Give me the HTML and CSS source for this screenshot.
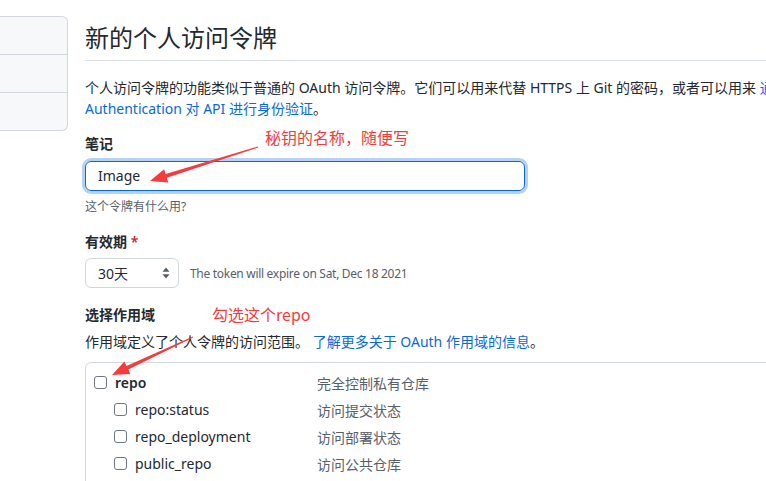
FILE: index.html
```html
<!DOCTYPE html>
<html lang="zh-CN">
<head>
<meta charset="utf-8">
<title>新的个人访问令牌</title>
<link rel="stylesheet" href="styles.css">
</head>
<body>
<div class="layout">
  <nav class="sidebar">
    <div class="side-row"></div>
    <div class="side-row"></div>
    <div class="side-row"></div>
  </nav>
  <main class="main">
    <h1 class="title">新的个人访问令牌</h1>
    <p class="intro">个人访问令牌的功能类似于普通的 OAuth 访问令牌。它们可以用来代替 HTTPS 上 Git 的密码，或者可以用来 <a class="link" href="#">通过 Basic<br>Authentication 对 API 进行身份验证</a>。</p>

    <label class="label">笔记</label>
    <div class="input">Image</div>
    <p class="note">这个令牌有什么用?</p>

    <label class="label label-exp">有效期 <span class="req">*</span></label>
    <div class="exp-row">
      <div class="select">30天
        <svg class="updown" width="8" height="12" viewBox="0 0 8 12"><path d="M4 0.5 L7.5 4.8 H0.5 Z M4 11.5 L7.5 7.2 H0.5 Z" fill="#57606a"/></svg>
      </div>
      <span class="exp-note">The token will expire on Sat, Dec 18 2021</span>
    </div>

    <label class="label label-scope">选择作用域</label>
    <p class="scope-desc">作用域定义了个人令牌的访问范围。 <a class="link" href="#">了解更多关于 OAuth 作用域的信息</a>。</p>

    <div class="scopes">
      <div class="scope-row">
        <div class="scope-name top"><span class="cb"></span><span class="name-bold">repo</span></div>
        <div class="scope-text">完全控制私有仓库</div>
      </div>
      <div class="scope-row">
        <div class="scope-name sub"><span class="cb"></span><span>repo:status</span></div>
        <div class="scope-text">访问提交状态</div>
      </div>
      <div class="scope-row">
        <div class="scope-name sub"><span class="cb"></span><span>repo_deployment</span></div>
        <div class="scope-text">访问部署状态</div>
      </div>
      <div class="scope-row">
        <div class="scope-name sub"><span class="cb"></span><span>public_repo</span></div>
        <div class="scope-text">访问公共仓库</div>
      </div>
    </div>
  </main>
</div>

<div class="anno anno1">秘钥的名称，随便写</div>
<div class="anno anno2">勾选这个repo</div>
<svg class="arrows" width="766" height="481" viewBox="0 0 766 481">
  <polygon fill="#f53c3c" points="150,181 164.1,169.2 165.6,174 257.8,146.5 258.2,147.5 166.8,177.8 168.3,182.6"/>
  <polygon fill="#f53c3c" points="112,375 124.4,361.5 126.5,366 192.8,336.5 193.2,337.5 128.3,369.6 130.4,374.1"/>
</svg>
</body>
</html>
```

FILE: styles.css
```css
html, body {
  margin: 0;
  padding: 0;
  overflow: hidden;
  background: #ffffff;
}
body {
  width: 766px;
  height: 481px;
  position: relative;
  font-family: "Noto Sans", "Noto Sans CJK SC", sans-serif;
  color: #24292f;
  font-size: 14px;
}
.layout {
  display: flex;
  padding-top: 16px;
  height: 465px;
  overflow: hidden;
}
.sidebar {
  width: 67px;
  flex-shrink: 0;
  background: #f6f8fa;
  border: 1px solid #d0d7de;
  border-left: none;
  border-radius: 0 6px 6px 0;
  align-self: flex-start;
}
.side-row {
  height: 37px;
  border-bottom: 1px solid #d0d7de;
}
.side-row:last-child {
  border-bottom: none;
}
.main {
  margin-left: 17px;
  width: 820px;
  flex-shrink: 0;
  padding-top: 6px;
}
.title {
  margin: 0;
  font-size: 24px;
  font-weight: 400;
  line-height: 30px;
  padding-bottom: 8px;
  border-bottom: 1px solid #d8dee4;
  font-family: "Noto Sans CJK SC", sans-serif;
}
.intro {
  margin: 16px 0 0;
  line-height: 21px;
  white-space: nowrap;
}
.link {
  color: #0969da;
  text-decoration: none;
}
.label {
  display: block;
  font-weight: 600;
  line-height: 21px;
  margin-top: 14px;
}
.input {
  margin-top: 7px;
  width: 414px;
  height: 28px;
  box-sizing: content-box;
  padding: 0 12px;
  border: 1px solid #0969da;
  border-radius: 6px;
  box-shadow: 0 0 0 3px rgba(9, 105, 218, 0.3);
  line-height: 28px;
  font-size: 14px;
}
.note {
  margin: 7px 0 0;
  font-size: 12px;
  line-height: 18px;
  color: #57606a;
}
.label-exp {
  margin-top: 15px;
}
.req {
  color: #cf222e;
}
.exp-row {
  display: flex;
  align-items: center;
  margin-top: 6px;
}
.select {
  display: flex;
  align-items: center;
  justify-content: space-between;
  box-sizing: border-box;
  height: 30px;
  width: 94px;
  padding: 0 8px 0 12px;
  border: 1px solid #d0d7de;
  border-radius: 6px;
}
.updown {
  display: block;
}
.exp-note {
  margin-left: 11px;
  font-size: 12px;
  letter-spacing: -0.3px;
  color: #57606a;
}
.label-scope {
  margin-top: 16px;
}
.scope-desc {
  margin: 6px 0 0;
  line-height: 21px;
}
.scopes {
  margin-top: 10px;
  border: 1px solid #d0d7de;
  border-radius: 6px 6px 0 0;
  padding: 6px 0 0 8px;
  height: 140px;
}
.scope-row {
  display: flex;
  align-items: center;
  height: 27px;
}
.scope-name {
  width: 223px;
  display: flex;
  align-items: center;
}
.scope-name.sub {
  padding-left: 20px;
  width: 203px;
}
.cb {
  width: 11px;
  height: 11px;
  border: 1px solid #6e7781;
  border-radius: 3px;
  margin-right: 8px;
  flex-shrink: 0;
}
.name-bold {
  font-weight: 600;
}
.scope-text {
  color: #57606a;
}
.anno {
  position: absolute;
  color: #f53c3c;
  font-family: "Noto Sans CJK SC", sans-serif;
  font-size: 16px;
  line-height: 20px;
}
.anno1 {
  left: 265px;
  top: 127px;
}
.anno2 {
  left: 212px;
  top: 304px;
}
.arrows {
  position: absolute;
  left: 0;
  top: 0;
  pointer-events: none;
}
```
